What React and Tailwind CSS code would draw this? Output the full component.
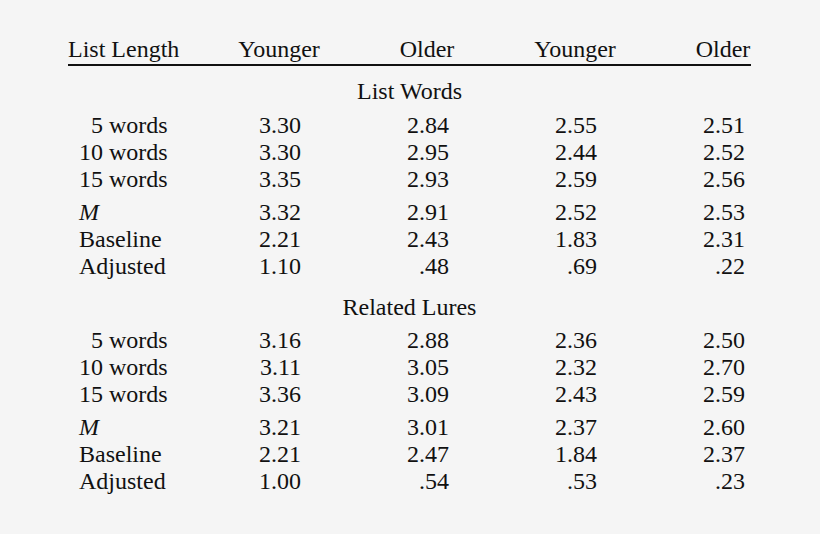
const sections = [
  {
    title: 'List Words',
    rows: [
      { label: '5 words', indent: true, values: ['3.30', '2.84', '2.55', '2.51'] },
      { label: '10 words', values: ['3.30', '2.95', '2.44', '2.52'] },
      { label: '15 words', values: ['3.35', '2.93', '2.59', '2.56'] },
      { label: 'M', italic: true, gap: true, values: ['3.32', '2.91', '2.52', '2.53'] },
      { label: 'Baseline', values: ['2.21', '2.43', '1.83', '2.31'] },
      { label: 'Adjusted', values: ['1.10', '.48', '.69', '.22'] },
    ],
  },
  {
    title: 'Related Lures',
    rows: [
      { label: '5 words', indent: true, values: ['3.16', '2.88', '2.36', '2.50'] },
      { label: '10 words', values: ['3.11', '3.05', '2.32', '2.70'] },
      { label: '15 words', values: ['3.36', '3.09', '2.43', '2.59'] },
      { label: 'M', italic: true, gap: true, values: ['3.21', '3.01', '2.37', '2.60'] },
      { label: 'Baseline', values: ['2.21', '2.47', '1.84', '2.37'] },
      { label: 'Adjusted', values: ['1.00', '.54', '.53', '.23'] },
    ],
  },
];

const Row = ({ row }) => (
  <div className={`grid grid-cols-[137px_148px_148px_148px_148px] ${row.gap ? 'mt-[6px]' : ''}`}>
    <div className={`pl-[11px] ${row.italic ? 'italic' : ''}`}>
      {row.indent && <span className="inline-block w-[12px]" />}
      {row.label}
    </div>
    {row.values.map((v, i) => (
      <div key={i} className="flex justify-center">
        <span className="block w-[44px] text-right">{v}</span>
      </div>
    ))}
  </div>
);

export default function App() {
  return (
    <div
      className="min-h-[534px] w-[820px] bg-[#f5f5f5] text-[#111] text-[24px] leading-[27px] pt-[36px]"
      style={{ fontFamily: '"Liberation Serif", "Times New Roman", serif' }}
    >
      <div className="ml-[68px] w-[683px]">
        <div className="grid grid-cols-[137px_148px_148px_148px_148px]">
          <div>List Length</div>
          <div className="text-center">Younger</div>
          <div className="text-center">Older</div>
          <div className="text-center">Younger</div>
          <div className="text-center">Older</div>
        </div>
        <div className="mt-[1px] h-[2px] bg-[#111]" />

        {sections.map((section, si) => (
          <div key={section.title} className={si === 0 ? 'mt-[12px]' : 'mt-[14px]'}>
            <div className="text-center">{section.title}</div>
            <div className={si === 0 ? 'mt-[7px]' : 'mt-[6px]'}>
              {section.rows.map((row) => (
                <Row key={row.label} row={row} />
              ))}
            </div>
          </div>
        ))}
      </div>
    </div>
  );
}
